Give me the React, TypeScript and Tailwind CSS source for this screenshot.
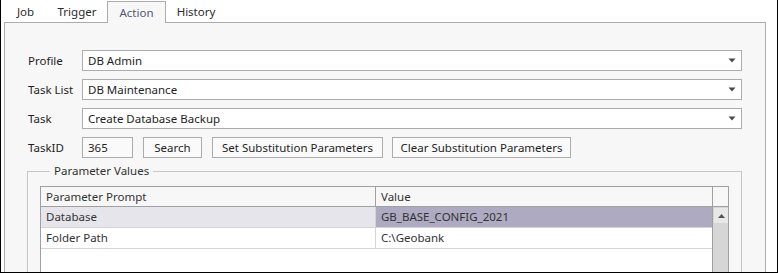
import React from 'react'

const font = "font-['Segoe_UI','Noto_Sans',sans-serif]"

const tabs = [
  { label: 'Job', width: 'w-[43px]' },
  { label: 'Trigger', width: 'w-[60px]' },
  { label: 'Action', width: 'w-[59px]', active: true },
  { label: 'History', width: 'w-[60px]' },
]

function DropArrow() {
  return (
    <svg width="8" height="5" viewBox="0 0 8 5" className="shrink-0">
      <path d="M0.5 0.5 L7.5 0.5 L4 4.5 Z" fill="#4a4a4a" />
    </svg>
  )
}

function Combo({ label, value }: { label: string; value: string }) {
  return (
    <div className="flex items-center h-[21px]">
      <div className="w-[55px] pl-px text-[#1e1e1e]">{label}</div>
      <div className="flex-1 h-full flex items-center justify-between bg-white border border-[#acacac] pl-[5px] pr-[5px] text-[#1e1e1e]">
        <span>{value}</span>
        <DropArrow />
      </div>
    </div>
  )
}

function Button({ children, width }: { children: React.ReactNode; width: string }) {
  return (
    <div
      className={`${width} h-[21px] flex items-center justify-center border border-[#acacac] bg-[#fafafa] text-[#1e1e1e]`}
    >
      {children}
    </div>
  )
}

export default function App() {
  return (
    <div
      className={`${font} text-[11.5px] leading-none w-[778px] h-[273px] overflow-hidden bg-white border-l border-r border-b border-black`}
    >
      {/* Tab strip */}
      <div className="flex h-[22px] pt-px ml-[3px]">
        {tabs.map((t) =>
          t.active ? (
            <div
              key={t.label}
              className={`${t.width} h-[22px] relative z-10 flex items-center justify-center bg-[#f7f7f7] border-l border-t border-r border-[#acacac] text-[#55557a]`}
            >
              {t.label}
            </div>
          ) : (
            <div key={t.label} className={`${t.width} h-[21px] flex items-center justify-center text-[#2b2b2b]`}>
              {t.label}
            </div>
          )
        )}
      </div>

      {/* Panel */}
      <div className="ml-[3px] w-[762px] h-[300px] bg-[#f7f7f7] border border-[#acacac] pl-[22px] pr-[23px] pt-[27px]">
        <div className="flex flex-col gap-[8px]">
          <Combo label="Profile" value="DB Admin" />
          <Combo label="Task List" value="DB Maintenance" />
          <Combo label="Task" value="Create Database Backup" />
          <div className="flex items-center h-[21px]">
            <div className="w-[55px] pl-px text-[#1e1e1e]">TaskID</div>
            <div className="w-[51px] h-full flex items-center bg-[#fafafa] border border-[#acacac] pl-[5px] text-[#1e1e1e]">
              365
            </div>
            <div className="ml-[10px]">
              <Button width="w-[59px]">Search</Button>
            </div>
            <div className="ml-[10px]">
              <Button width="w-[171px]">Set Substitution Parameters</Button>
            </div>
            <div className="ml-[9px]">
              <Button width="w-[179px]">Clear Substitution Parameters</Button>
            </div>
          </div>
        </div>

        {/* Parameter Values group */}
        <fieldset className="mt-[6px] border border-[#c6c6c6] px-[12px] pb-[40px]">
          <legend className="ml-[10px] px-[4px] text-[#333] leading-[14px]">Parameter Values</legend>
          <div className="mt-[8px] border border-[#a0a0a0] bg-white flex">
            <div className="flex-1">
              <div className="flex h-[20px] bg-[#f7f7f7] border-b border-[#a0a0a0]">
                <div className="w-[335px] pl-[5px] flex items-center border-r border-[#a0a0a0] text-[#333]">
                  Parameter Prompt
                </div>
                <div className="flex-1 pl-[5px] flex items-center text-[#333]">Value</div>
              </div>
              <div className="flex h-[21px] border-b border-[#d4d4d4]">
                <div className="w-[335px] pl-[5px] flex items-center bg-[#e6e5ec] border-r border-[#d4d4d4] text-[#333]">
                  Database
                </div>
                <div className="flex-1 pl-[5px] flex items-center bg-[#adaac2] text-[#333]">GB_BASE_CONFIG_2021</div>
              </div>
              <div className="flex h-[21px] border-b border-[#d4d4d4]">
                <div className="w-[335px] pl-[5px] flex items-center border-r border-[#d4d4d4] text-[#333]">
                  Folder Path
                </div>
                <div className="flex-1 pl-[5px] flex items-center text-[#333]">C:\Geobank</div>
              </div>
              <div className="h-[60px]" />
            </div>
            {/* Scrollbar */}
            <div className="w-[16px] flex flex-col border-l border-[#a0a0a0]">
              <div className="h-[20px] bg-[#f7f7f7] border-b border-[#a0a0a0]" />
              <div className="flex-1 bg-[#d6d6d6] pt-px pl-px">
                <div className="w-[14px] h-[15px] bg-[#e8e8e8] flex items-center justify-center">
                  <svg width="7" height="4" viewBox="0 0 7 4">
                    <path d="M0 4 L7 4 L3.5 0 Z" fill="#555" />
                  </svg>
                </div>
              </div>
            </div>
          </div>
        </fieldset>
      </div>
    </div>
  )
}
